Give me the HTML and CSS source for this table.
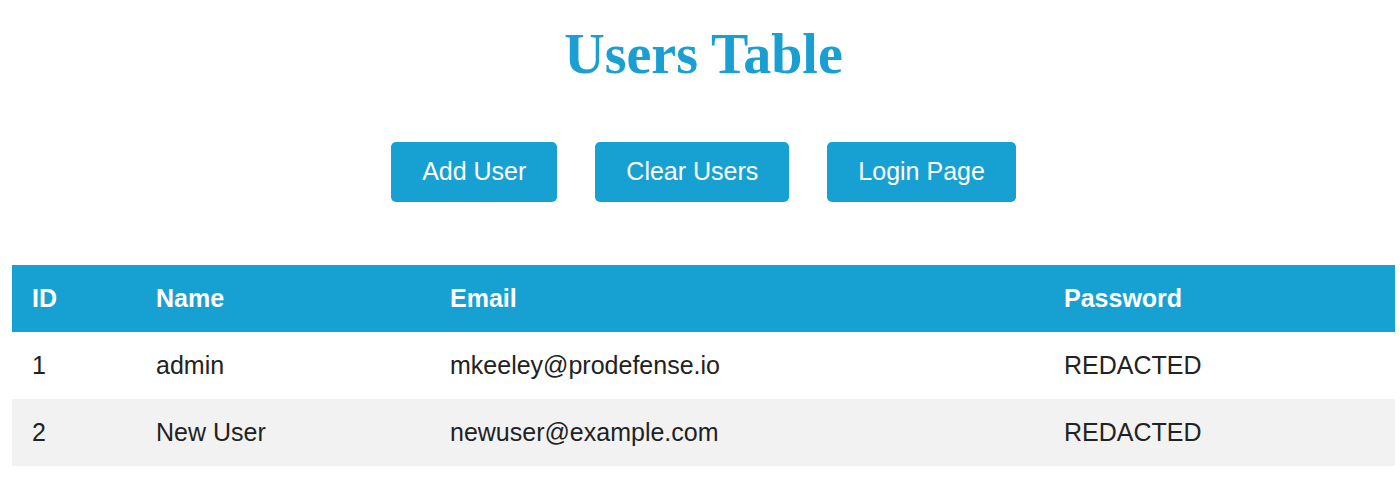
FILE: index.html
```html
<!DOCTYPE html>
<html>
<head>
<meta charset="utf-8">
<link rel="stylesheet" href="styles.css">
</head>
<body>
<div class="page">
  <h1 class="title">Users Table</h1>
  <div class="actions">
    <button class="btn">Add User</button>
    <button class="btn">Clear Users</button>
    <button class="btn">Login Page</button>
  </div>
  <table class="users">
    <thead>
      <tr><th class="c-id">ID</th><th class="c-name">Name</th><th class="c-email">Email</th><th>Password</th></tr>
    </thead>
    <tbody>
      <tr><td>1</td><td>admin</td><td>mkeeley@prodefense.io</td><td>REDACTED</td></tr>
      <tr class="alt"><td>2</td><td>New User</td><td>newuser@example.com</td><td>REDACTED</td></tr>
    </tbody>
  </table>
</div>
</body>
</html>
```
FILE: styles.css
```css
html, body { margin: 0; padding: 0; background: #fff; }
body { font-family: "Liberation Sans", Arial, sans-serif; color: #222; }
.page { margin-left: 12px; width: 1383px; }
.title {
  font-family: "Liberation Serif", "Times New Roman", serif;
  font-weight: bold;
  font-size: 56px;
  line-height: 64px;
  color: #1a9fd2;
  text-align: center;
  margin: 22px 0 0;
}
.actions {
  display: flex;
  justify-content: center;
  gap: 38px;
  margin-top: 56px;
}
.btn {
  font-family: "Liberation Sans", Arial, sans-serif;
  font-size: 25px;
  line-height: 29px;
  color: #fff;
  background: #17a1d3;
  border: none;
  border-radius: 5px;
  padding: 15px 31px 16px;
  height: 60px;
}
.users {
  margin-top: 63px;
  width: 1383px;
  border-collapse: collapse;
  font-size: 25px;
  table-layout: fixed;
}
.users th, .users td {
  text-align: left;
  padding: 19px 20px;
  line-height: 29px;
}
.users th { background: #17a1d3; color: #fff; font-weight: bold; }
.c-id { width: 84px; }
.c-name { width: 254px; }
.c-email { width: 574px; }
.users tr.alt td { background: #f2f2f2; }
```
